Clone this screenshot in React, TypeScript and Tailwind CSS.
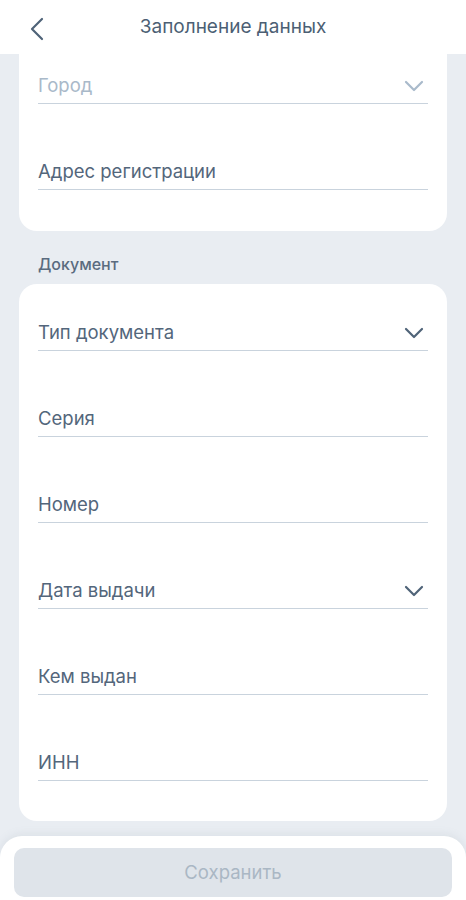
import React from 'react';

const font = { fontFamily: 'Inter, "Noto Sans", sans-serif' };

const Chevron = ({ muted }: { muted?: boolean }) => (
  <svg width="20" height="12" viewBox="0 0 20 12" fill="none">
    <path
      d="M2 2l8 8 8-8"
      stroke={muted ? '#a9bacb' : '#4f6378'}
      strokeWidth="2.2"
      strokeLinecap="round"
      strokeLinejoin="round"
    />
  </svg>
);

const Field = ({ label, select, muted }: { label: string; select?: boolean; muted?: boolean }) => (
  <div className="flex h-[35px] items-center justify-between border-b border-[#c9d3dd]">
    <span className={muted ? 'text-[18.5px] text-[#a9b9c9]' : 'text-[18.5px] text-[#53667b]'}>{label}</span>
    {select && (
      <span className="mr-[4px]">
        <Chevron muted={muted} />
      </span>
    )}
  </div>
);

export default function App() {
  return (
    <div className="flex h-[900px] flex-col overflow-hidden bg-[#e9edf2]" style={font}>
      {/* header */}
      <div className="relative flex h-[54px] shrink-0 items-center justify-center bg-white">
        <svg className="absolute left-[29px] top-[17px]" width="16" height="24" viewBox="0 0 16 24" fill="none">
          <path d="M13 2L3 12l10 10" stroke="#4f6378" strokeWidth="2.2" strokeLinecap="round" strokeLinejoin="round" />
        </svg>
        <h1 className="text-[19px] text-[#4c5f74]">Заполнение данных</h1>
      </div>

      {/* address card */}
      <div className="mx-[19px] rounded-b-[18px] bg-white px-[19px] pb-[41px] pt-[15px]">
        <div className="flex flex-col gap-[51px]">
          <Field label="Город" select muted />
          <Field label="Адрес регистрации" />
        </div>
      </div>

      <div className="ml-[38px] mt-[23px] mb-[10px] h-[20px] text-[16px] font-medium leading-[20px] text-[#5a6b7f]">
        Документ
      </div>

      {/* document card */}
      <div className="mx-[19px] rounded-[18px] bg-white px-[19px] pb-[40px] pt-[32px]">
        <div className="flex flex-col gap-[51px]">
          <Field label="Тип документа" select />
          <Field label="Серия" />
          <Field label="Номер" />
          <Field label="Дата выдачи" select />
          <Field label="Кем выдан" />
          <Field label="ИНН" />
        </div>
      </div>

      {/* bottom bar */}
      <div className="mt-[15px] flex-1 rounded-t-[22px] bg-white px-[14px] pt-[12px] shadow-[0_-2px_8px_rgba(120,140,160,0.12)]">
        <button className="flex h-[49px] w-full items-center justify-center rounded-[10px] bg-[#dfe4ea] text-[18.5px] text-[#aab7c4]">
          Сохранить
        </button>
      </div>
    </div>
  );
}
